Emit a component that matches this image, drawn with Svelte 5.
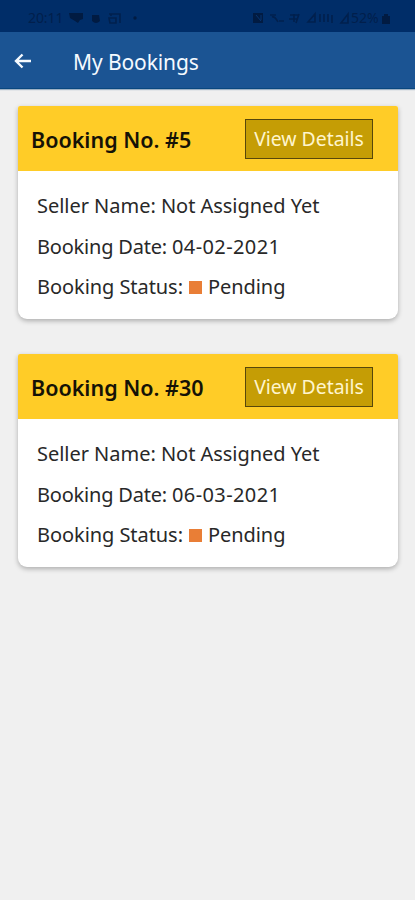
<script>
  // Bookings list: status bar, app bar, one card per booking.
  let { title = "My Bookings" } = $props();

  let bookings = $state([
    { id: 5, seller: "Not Assigned Yet", date: "04-02-2021", status: "Pending" },
    { id: 30, seller: "Not Assigned Yet", date: "06-03-2021", status: "Pending" }
  ]);
</script>

<div class="screen">
  <div class="status-bar">
    <div class="status-group">
      <span class="clock">20:11</span>
      <svg class="notices" viewBox="0 0 72 14" aria-hidden="true">
        <path d="M0 2h14v6l-3 1-2 3-3-2-5-3z" />
        <path d="M23 4h7l1 6q-4 4-8 0z" />
        <path d="M40 3h11v9M40 7h7v5h-6zM42 3v2" class="line" />
        <circle cx="66" cy="7" r="1.7" />
      </svg>
    </div>
    <div class="status-group">
      <svg class="signals" viewBox="0 0 100 14" aria-hidden="true">
        <path d="M0 2h10v10H0z" />
        <path d="M3 4l5 6M8 4v5" class="slash" />
        <path d="M17 4h6M19 6q3-1 6 5M26 10h5" class="line" />
        <path d="M37 4h9M36 8h9M41 3v8M46 3l-3 9" class="line" />
        <path d="M55 11l7-8v8zM67 3v8M71 3v8M75 3v8M79 4v8" class="line" />
        <path d="M88 12l7-9v9z" class="line" />
      </svg>
      <span class="charge">52%</span>
      <svg class="battery" viewBox="0 0 8 12" aria-hidden="true">
        <path d="M2 2h4v2h2v8H0V4h2z" />
      </svg>
    </div>
  </div>

  <header class="app-bar">
    <button class="back" aria-label="Back">
      <svg viewBox="0 0 18 16">
        <path d="M17 8H2M8.5 1.5L2 8l6.5 6.5" />
      </svg>
    </button>
    <h1>{title}</h1>
  </header>

  <main>
    {#each bookings as booking (booking.id)}
      <article class="card">
        <div class="card-head">
          <h2>Booking No. #{booking.id}</h2>
          <button class="details">View Details</button>
        </div>
        <div class="card-body">
          <p class="seller">Seller Name: {booking.seller}</p>
          <p class="date">Booking Date: <span class="digits">{booking.date}</span></p>
          <p class="state">Booking Status:<span class="pip"></span>{booking.status}</p>
        </div>
      </article>
    {/each}
  </main>
</div>

<style>
  :global(body) {
    background: #f0f0f0;
  }
  .screen {
    min-height: 900px;
    box-sizing: border-box;
    background: #f0f0f0;
    color: #282828;
    font-family: "Noto Sans", sans-serif;
  }
  button {
    font: inherit;
    cursor: pointer;
  }
  h1, h2, p {
    margin: 0;
    white-space: nowrap;
  }

  .status-bar {
    height: 32px;
    padding: 3px 25px 0 28px;
    box-sizing: border-box;
    display: flex;
    align-items: center;
    justify-content: space-between;
    background: #002d68;
    color: #011f4c;
    font-size: 14px;
  }
  .status-group {
    display: flex;
    align-items: center;
  }
  .status-bar svg {
    fill: #011b42;
    display: block;
  }
  .status-bar .line {
    fill: none;
    stroke: #01204d;
    stroke-width: 1.6;
  }
  .status-bar .slash {
    fill: none;
    stroke: #073570;
  }
  .clock { width: 41px; letter-spacing: -0.1px; }
  .notices { width: 72px; height: 14px; }
  .signals { width: 100px; height: 14px; margin-right: -2px; }
  .charge { width: 31px; letter-spacing: 0; }
  .battery { width: 8px; height: 12px; }

  .app-bar {
    height: 57px;
    box-sizing: border-box;
    padding: 3px 13px 0 14px;
    display: flex;
    align-items: center;
    background: #1b5493;
    border-bottom: 1px solid #09477f;
    box-shadow: 0 1px 1px #9eb2c5;
    color: #f5faff;
  }
  .back {
    width: 59px;
    padding: 0;
    border: 0;
    background: none;
  }
  .back svg {
    display: block;
    width: 18px;
    height: 16px;
    margin-bottom: 2px;
    fill: none;
    stroke: #f5faff;
    stroke-width: 2.4;
  }
  h1 {
    font-size: 21px;
    font-weight: 400;
    letter-spacing: -0.1px;
    line-height: 30px;
  }

  main {
    padding: 17px 17px 0 18px;
    display: grid;
    gap: 35px;
  }
  .card {
    height: 213px;
    border-radius: 2px 2px 9px 9px;
    overflow: hidden;
    background: #fff;
    box-shadow: 0 2px 5px rgba(0, 0, 0, 0.28);
  }
  .card-head {
    height: 65px;
    box-sizing: border-box;
    padding: 0 25px 0 13px;
    display: flex;
    align-items: center;
    justify-content: space-between;
    background: #ffcc27;
  }
  h2 {
    padding-top: 2px;
    color: #151206;
    font-size: 21.5px;
    font-weight: 600;
    line-height: 30px;
  }
  .details {
    width: 128px;
    height: 40px;
    box-sizing: border-box;
    padding: 1px 0 0;
    border: 1px solid #57470b;
    background: #c59d05;
    color: #fff5cd;
    font-size: 19.4px;
    line-height: 30px;
    white-space: nowrap;
  }
  .card-body {
    padding: 15px 19px;
    font-size: 20px;
    line-height: 40.5px;
  }
  .seller {
    letter-spacing: -0.03px;
  }
  .date {
    letter-spacing: -0.2px;
  }
  .digits {
    letter-spacing: 0.4px;
  }
  .state {
    display: flex;
    align-items: center;
    letter-spacing: -0.06px;
  }
  .pip {
    width: 13px;
    height: 13px;
    margin: 0 6px;
    background: #e97e36;
  }
</style>
